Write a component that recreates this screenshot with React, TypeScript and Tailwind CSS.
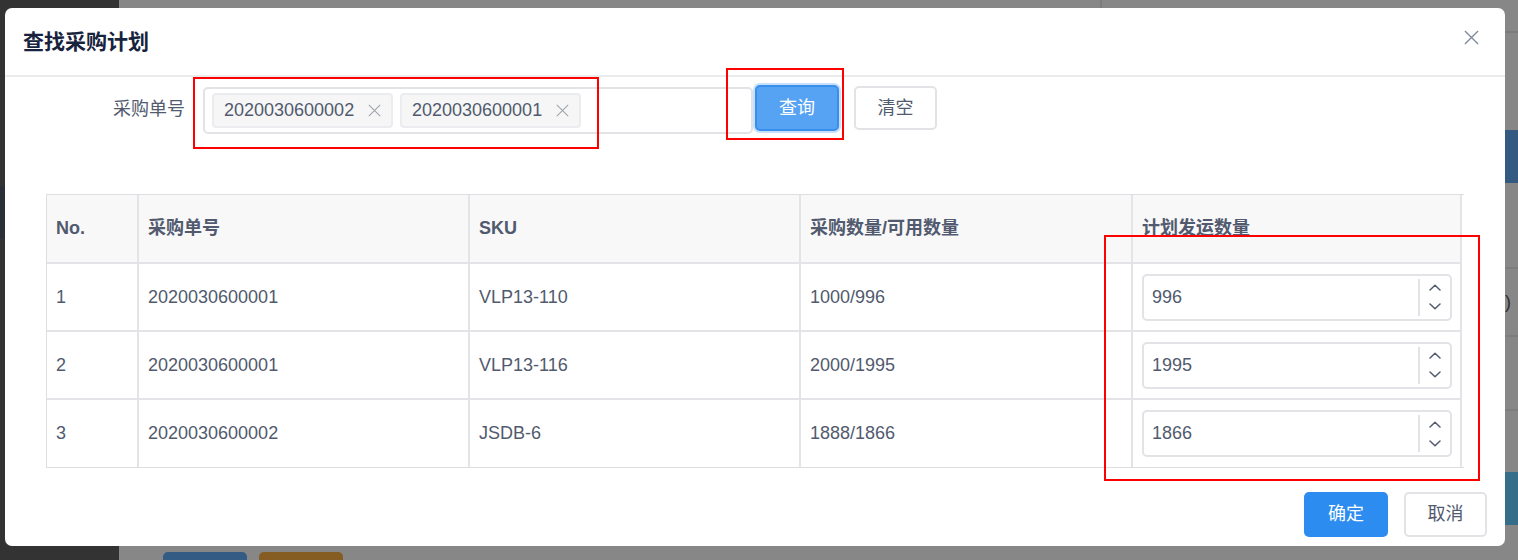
import React from "react";

const rows = [
  { no: 1, order: "2020030600001", sku: "VLP13-110", qty: "1000/996", plan: "996" },
  { no: 2, order: "2020030600001", sku: "VLP13-116", qty: "2000/1995", plan: "1995" },
  { no: 3, order: "2020030600002", sku: "JSDB-6", qty: "1888/1866", plan: "1866" },
];

const tags = ["2020030600002", "2020030600001"];

function CloseIcon({ size, color, width }: { size: number; color: string; width: number }) {
  return (
    <svg width={size} height={size} viewBox="0 0 16 16" fill="none">
      <path d="M1 1L15 15M15 1L1 15" stroke={color} strokeWidth={width} />
    </svg>
  );
}

function Chevron({ up }: { up?: boolean }) {
  return (
    <svg width="12" height="7" viewBox="0 0 12 7" fill="none">
      <path
        d={up ? "M1 6L6 1.2L11 6" : "M1 1L6 5.8L11 1"}
        stroke="#515a6e"
        strokeWidth="1.5"
        strokeLinecap="round"
        strokeLinejoin="round"
      />
    </svg>
  );
}

function NumberInput({ value }: { value: string }) {
  return (
    <div className="flex h-[47px] w-[310px] items-center rounded-[5px] border-2 border-[#e1e3e7] bg-white">
      <span className="flex-1 pl-[8px]">{value}</span>
      <div className="flex h-[37px] w-[32px] flex-col items-center justify-center gap-[12px] border-l-2 border-[#e1e3e7]">
        <Chevron up />
        <Chevron />
      </div>
    </div>
  );
}

export default function App() {
  const cell = "flex items-center pl-[9px] border-r-2 border-[#e3e4e8]";
  return (
    <div
      className="relative flex h-[560px] w-[1518px] overflow-hidden text-[18px] text-[#515a6e]"
      style={{ fontFamily: '"Liberation Sans", "Noto Sans CJK SC", sans-serif' }}
    >
      {/* page behind the overlay */}
      <div className="flex w-[119px] flex-col bg-[#333333]">
        <div className="h-[186px]" />
        <div className="h-[53px] w-[5px] bg-[#2a2f38]" />
      </div>
      <div className="flex flex-1 bg-[#878787]">
        <div className="flex flex-1 flex-col">
          <div className="ml-[981px] h-[8px] w-[2px] bg-[#7b7b7b]" />
          <div className="flex-1" />
          <div className="flex h-[8px] gap-[12px] pl-[44px]">
            <div className="w-[84px] rounded-t-[5px] bg-[#345b84]" />
            <div className="w-[84px] rounded-t-[5px] bg-[#855d22]" />
          </div>
        </div>
        <div className="flex w-[13px] flex-col">
          <div className="h-[31px]" />
          <div className="h-[2px] bg-[#7b7b7b]" />
          <div className="h-[97px]" />
          <div className="h-[53px] bg-[#355a82]" />
          <div className="h-[84px]" />
          <div className="h-[2px] bg-[#7d7d7d]" />
          <div className="flex h-[66px] items-center text-[#2f2f2f]">)</div>
          <div className="h-[2px] bg-[#7d7d7d]" />
          <div className="h-[72px]" />
          <div className="h-[2px] bg-[#7d7d7d]" />
          <div className="h-[61px]" />
          <div className="h-[53px] bg-[#366d88]" />
        </div>
      </div>

      {/* modal */}
      <div className="absolute left-[5px] top-[8px] flex h-[538px] w-[1500px] flex-col rounded-[7px] bg-white">
        <div className="flex h-[69px] items-center justify-between border-b-2 border-[#ebebeb] pl-[18px] pr-[26px]">
          <span className="text-[21px] font-bold text-[#17233d]">查找采购计划</span>
          <span className="mb-[8px]">
            <CloseIcon size={15} color="#7d8898" width={1.4} />
          </span>
        </div>

        <div className="mt-[8px] flex items-start">
          <div className="flex h-[47px] w-[180px] items-center justify-end pt-[2px]">采购单号</div>
          <div className="ml-[18px] mt-[2px] flex h-[47px] w-[550px] items-center gap-[7px] rounded-[5px] border-2 border-[#e1e3e7] pl-[7px]">
            {tags.map((t) => (
              <div
                key={t}
                className="flex h-[35px] w-[181px] items-center rounded-[4px] border-2 border-[#ebecef] bg-[#f6f6f7] pl-[10px]"
              >
                <span className="flex-1">{t}</span>
                <span className="mr-[10px]">
                  <CloseIcon size={13} color="#9ea3ab" width={1.3} />
                </span>
              </div>
            ))}
          </div>
          <button className="ml-[2px] flex h-[46px] w-[84px] items-center justify-center rounded-[5px] border-2 border-[#3a8fec] bg-[#57a3f3] text-white ring-2 ring-[#c9e0f9]">
            查询
          </button>
          <button className="ml-[15px] mt-[1px] flex h-[44px] w-[83px] items-center justify-center rounded-[5px] border-2 border-[#e1e3e7] bg-white">
            清空
          </button>
        </div>

        <div className="ml-[41px] mt-[60px] w-[1418px] border-y border-l border-[#dcdee2] pr-[2px]">
          <div className="grid grid-cols-[92px_331px_331px_332px_329px]">
            {["No.", "采购单号", "SKU", "采购数量/可用数量", "计划发运数量"].map((h) => (
              <div key={h} className={`${cell} h-[69px] border-b-2 bg-[#f8f8f9] font-bold`}>
                {h}
              </div>
            ))}
            {rows.map((r, i) => {
              const rowCls = i === rows.length - 1 ? "h-[67px]" : "h-[68px] border-b-2";
              return (
                <React.Fragment key={r.no}>
                  <div className={`${cell} ${rowCls}`}>{r.no}</div>
                  <div className={`${cell} ${rowCls}`}>{r.order}</div>
                  <div className={`${cell} ${rowCls}`}>{r.sku}</div>
                  <div className={`${cell} ${rowCls}`}>{r.qty}</div>
                  <div className={`${cell} ${rowCls} pl-[8px]`}>
                    <NumberInput value={r.plan} />
                  </div>
                </React.Fragment>
              );
            })}
          </div>
        </div>

        <div className="mt-[24px] flex justify-end gap-[16px] pr-[18px]">
          <button className="flex h-[45px] w-[84px] items-center justify-center rounded-[5px] bg-[#2d8cf0] text-white">
            确定
          </button>
          <button className="flex h-[45px] w-[83px] items-center justify-center rounded-[5px] border-2 border-[#e1e3e7] bg-white">
            取消
          </button>
        </div>
      </div>

      {/* red annotation boxes */}
      <div className="absolute left-[193px] top-[77px] h-[72px] w-[406px] border-2 border-[#ff0000]" />
      <div className="absolute left-[726px] top-[68px] h-[72px] w-[118px] border-2 border-[#ff0000]" />
      <div className="absolute left-[1104px] top-[235px] h-[246px] w-[376px] border-2 border-[#ff0000]" />
    </div>
  );
}
